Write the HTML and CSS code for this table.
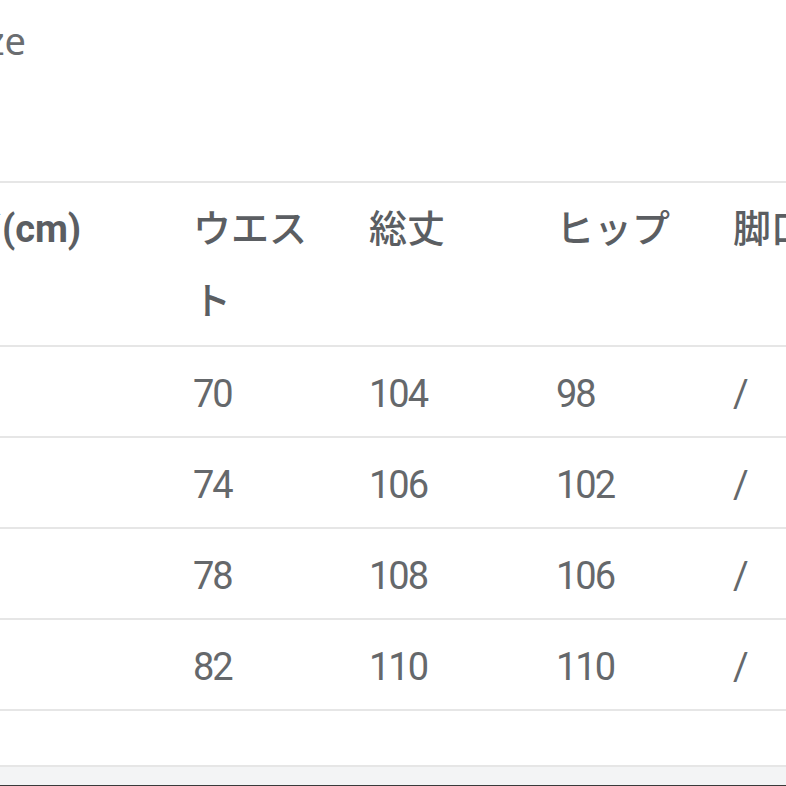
FILE: index.html
```html
<!DOCTYPE html>
<html lang="ja">
<head>
<meta charset="utf-8">
<title>Size</title>
<link rel="stylesheet" href="styles.css">
</head>
<body>
<div class="page">
  <div class="title">Size</div>
  <div class="sheet">
    <table class="size-table">
      <colgroup>
        <col class="c1"><col class="c2"><col class="c3"><col class="c4"><col class="c5">
      </colgroup>
      <thead>
        <tr>
          <th>サイズ<span class="unit">(cm)</span></th>
          <th>ウエスト</th>
          <th>総丈</th>
          <th>ヒップ</th>
          <th>脚口</th>
        </tr>
      </thead>
      <tbody>
        <tr><td>S</td><td>70</td><td>104</td><td>98</td><td>/</td></tr>
        <tr><td>M</td><td>74</td><td>106</td><td>102</td><td>/</td></tr>
        <tr><td>L</td><td>78</td><td>108</td><td>106</td><td>/</td></tr>
        <tr><td>XL</td><td>82</td><td>110</td><td>110</td><td>/</td></tr>
      </tbody>
    </table>
  </div>
  <div class="footer"></div>
</div>
</body>
</html>
```
FILE: styles.css
```css
html, body {
  margin: 0;
  padding: 0;
  background: #ffffff;
  overflow: hidden;
}
.page {
  width: 786px;
  height: 786px;
  overflow: hidden;
  font-family: Roboto, "Noto Sans CJK JP", sans-serif;
  color: #5f6266;
  display: flex;
  flex-direction: column;
}
.title {
  font-family: "Noto Sans", "Noto Sans CJK JP", sans-serif;
  font-size: 38px;
  line-height: 48px;
  color: #6a6d70;
  margin-left: -44px;
  padding-top: 16px;
  height: 181px;
  box-sizing: border-box;
  flex: none;
}
.sheet {
  margin-left: -111px;
  height: 584px;
  flex: none;
}
.size-table {
  border-collapse: collapse;
  table-layout: fixed;
  width: 1000px;
  border-top: 2px solid #e6e6e6;
}
.size-table col.c1 { width: 304px; }
.size-table col.c2 { width: 176px; }
.size-table col.c3 { width: 187px; }
.size-table col.c4 { width: 177px; }
.size-table col.c5 { width: 156px; }
.size-table th,
.size-table td {
  text-align: left;
  vertical-align: top;
  padding: 11px 0 6px 0;
  font-size: 38px;
  line-height: 72px;
  border-bottom: 2px solid #e6e6e6;
}
.size-table th {
  font-family: "Noto Sans CJK JP", sans-serif;
  font-weight: 500;
  color: #5b5e62;
  padding-top: 7px;
  padding-bottom: 11px;
}
.size-table th:nth-child(2) {
  padding-right: 30px;
}
.size-table th .unit {
  font-family: Roboto, sans-serif;
  font-weight: 700;
}
.size-table td {
  font-weight: 400;
  color: #65686b;
  letter-spacing: -2px;
}
.footer {
  height: 18px;
  background: #f3f4f5;
  border-top: 2px solid #e6e6e6;
  border-bottom: 1px solid #3a3a3a;
  flex: none;
}
```
